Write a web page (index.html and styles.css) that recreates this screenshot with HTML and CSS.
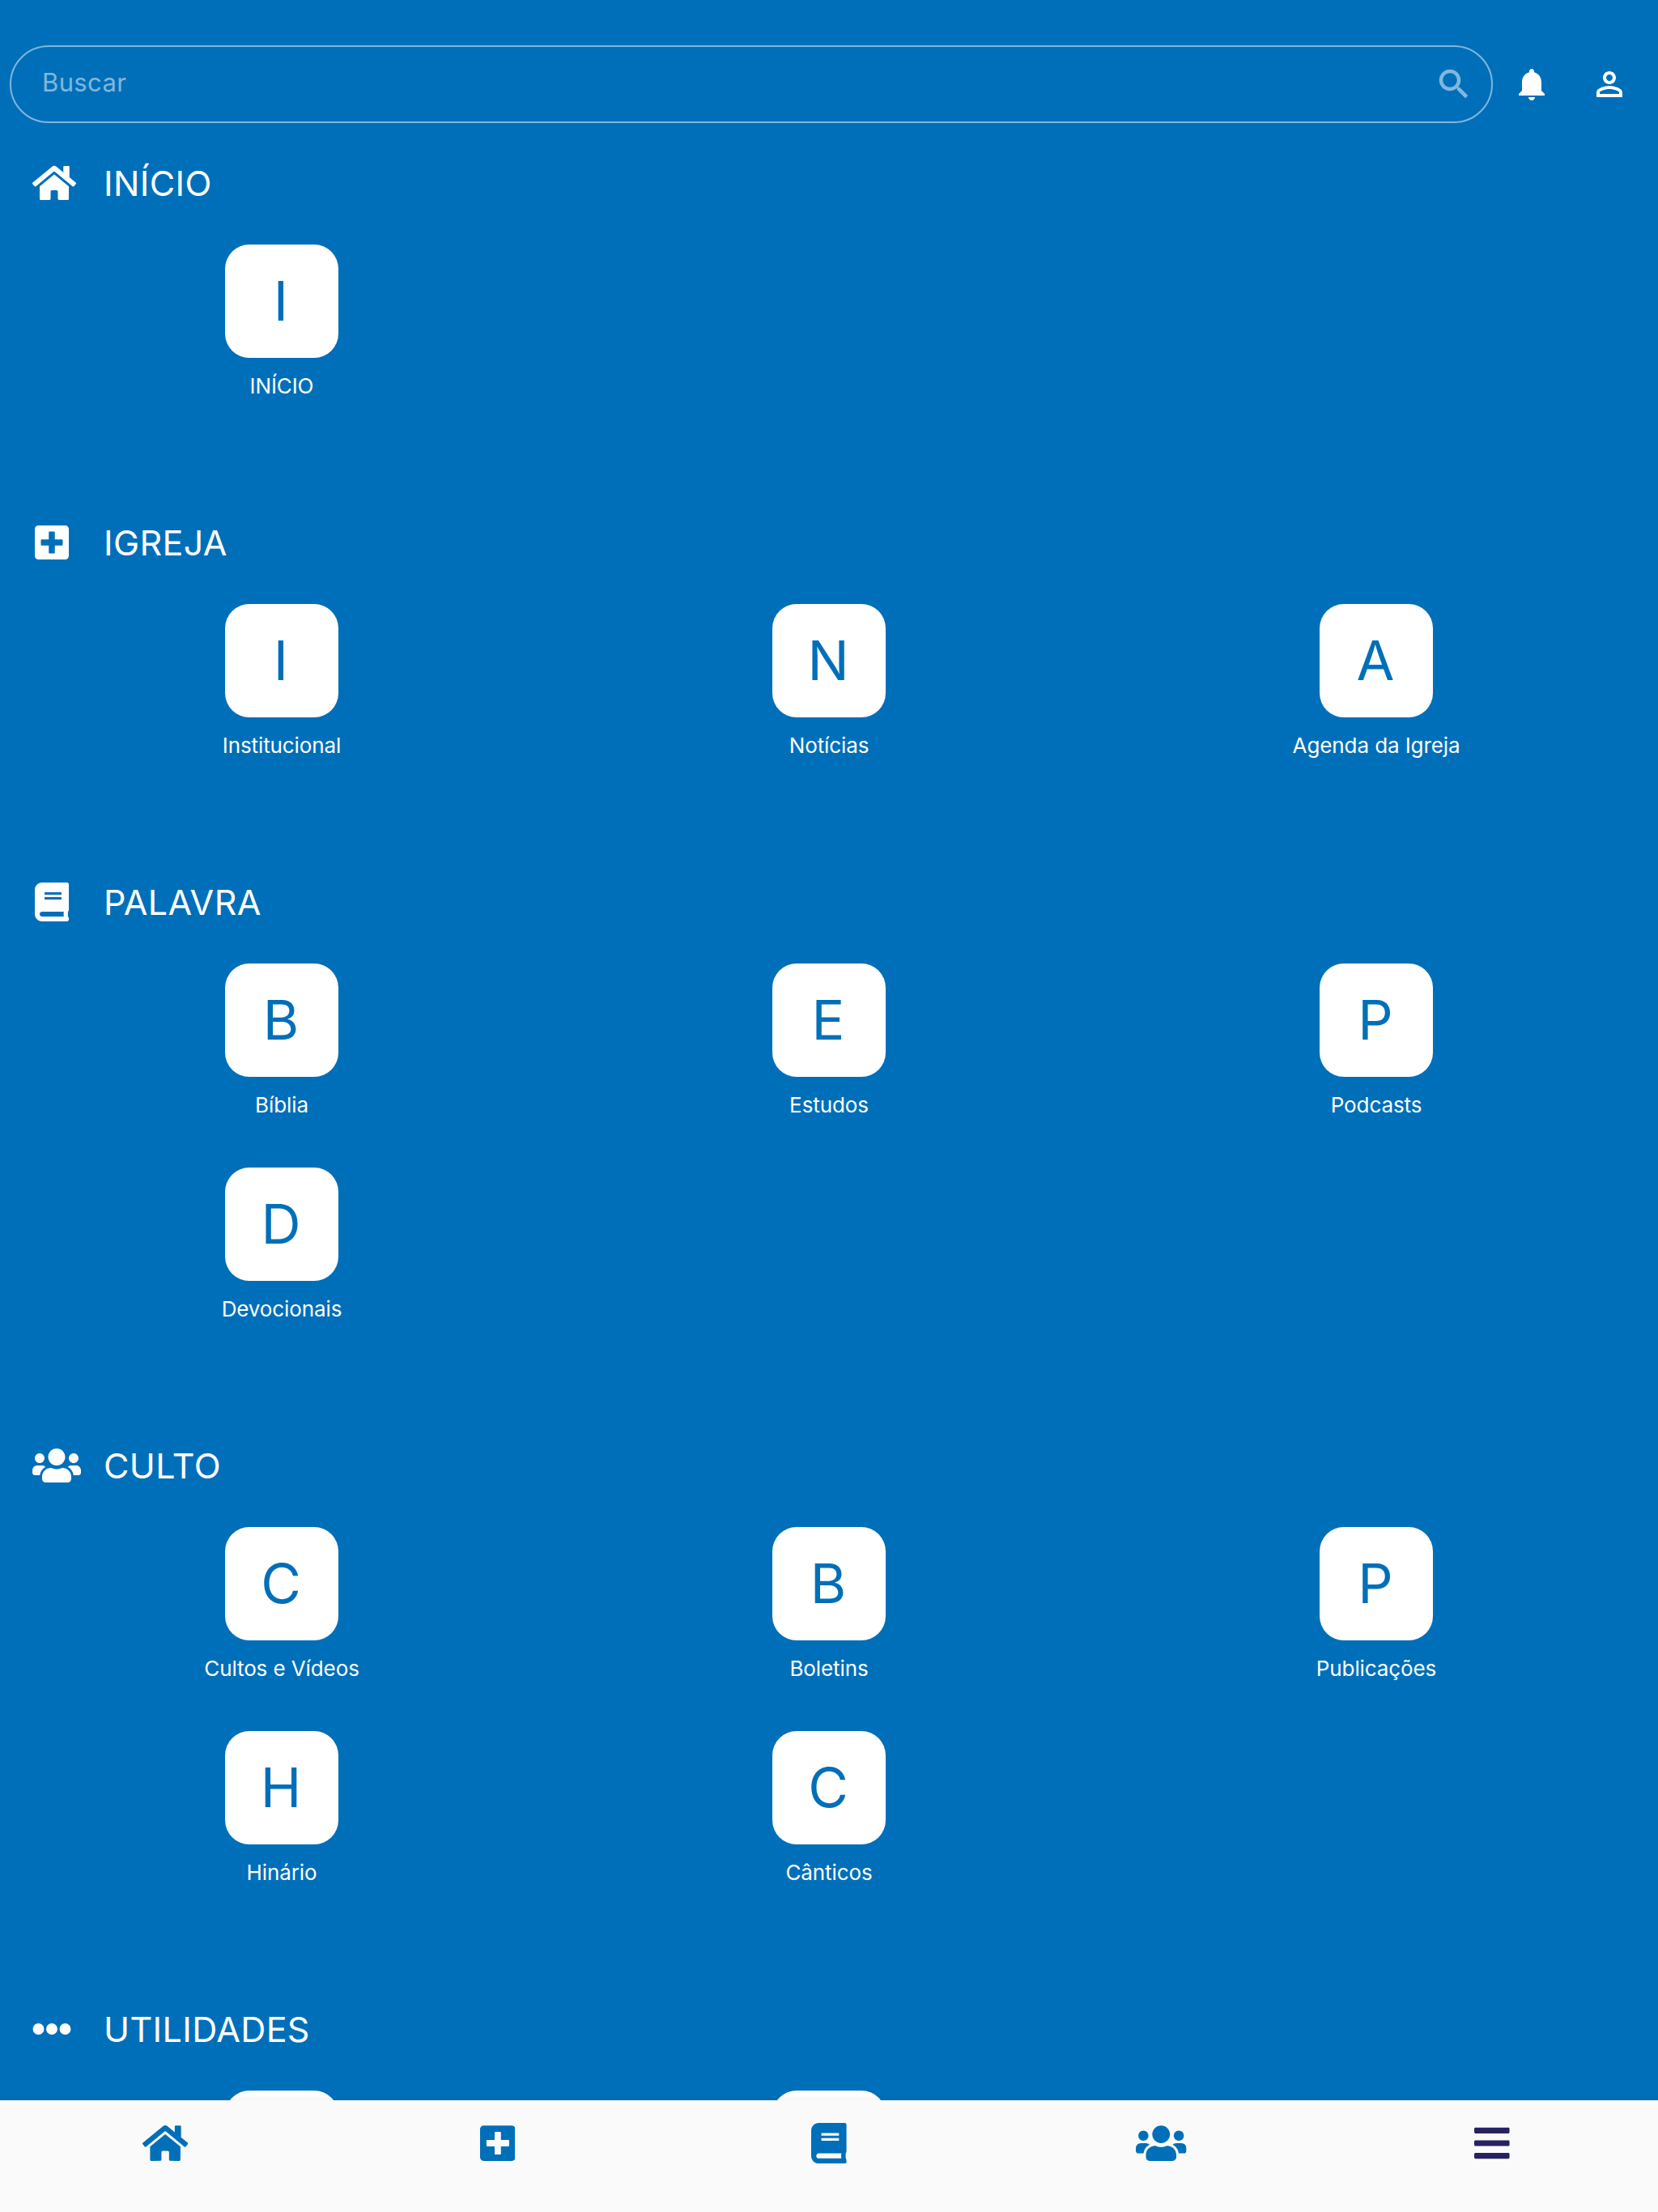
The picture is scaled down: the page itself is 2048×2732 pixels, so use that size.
FILE: index.html
```html
<!DOCTYPE html>
<html lang="pt-BR">
<head>
<meta charset="utf-8">
<title>Menu</title>
<link rel="stylesheet" href="styles.css">
</head>
<body>
<svg class="sprite" aria-hidden="true">
  <symbol id="home" viewBox="0 0 576 512"><path d="M280.37 148.26L96 300.11V464a16 16 0 0 0 16 16l112.06-.29a16 16 0 0 0 15.92-16V368a16 16 0 0 1 16-16h64a16 16 0 0 1 16 16v95.64a16 16 0 0 0 16 16.05L464 480a16 16 0 0 0 16-16V300L295.67 148.26a12.19 12.19 0 0 0-15.3 0zM571.6 251.47L488 182.56V44.05a12 12 0 0 0-12-12h-56a12 12 0 0 0-12 12v72.61L318.47 43a48 48 0 0 0-61 0L4.34 251.47a12 12 0 0 0-1.6 16.9l25.5 31A12 12 0 0 0 45.15 301l235.22-193.74a12.19 12.19 0 0 1 15.3 0L530.9 301a12 12 0 0 0 16.9-1.6l25.5-31a12 12 0 0 0-1.7-16.93z"/></symbol>
  <symbol id="plus" viewBox="0 0 448 512"><path fill-rule="evenodd" d="M400 32H48C21.500 32 0 53.500 0 80v352c0 26.500 21.500 48 48 48h352c26.500 0 48-21.500 48-48V80c0-26.500-21.500-48-48-48zm-32 252c0 6.600-5.400 12-12 12h-92v92c0 6.600-5.400 12-12 12h-56c-6.600 0-12-5.400-12-12v-92H92c-6.600 0-12-5.400-12-12v-56c0-6.600 5.400-12 12-12h92v-92c0-6.600 5.400-12 12-12h56c6.600 0 12 5.400 12 12v92h92c6.600 0 12 5.400 12 12v56z"/></symbol>
  <symbol id="book" viewBox="0 0 448 512"><path fill-rule="evenodd" d="M448 360V24c0-13.300-10.700-24-24-24H96C43 0 0 43 0 96v320c0 53 43 96 96 96h328c13.300 0 24-10.700 24-24v-16c0-7.500-3.500-14.300-8.900-18.700-4.200-15.400-4.200-59.300 0-74.700 5.400-4.300 8.900-11.100 8.900-18.600zM128 134c0-3.300 2.700-6 6-6h212c3.300 0 6 2.700 6 6v20c0 3.300-2.700 6-6 6H134c-3.300 0-6-2.700-6-6v-20zm0 64c0-3.300 2.700-6 6-6h212c3.300 0 6 2.700 6 6v20c0 3.300-2.700 6-6 6H134c-3.300 0-6-2.700-6-6v-20zm253.400 250H96c-17.700 0-32-14.300-32-32 0-17.600 14.400-32 32-32h285.400c-1.900 17.100-1.900 46.900 0 64z"/></symbol>
  <symbol id="users" viewBox="0 0 640 512"><path d="M96 224c35.300 0 64-28.700 64-64s-28.700-64-64-64-64 28.700-64 64 28.700 64 64 64zm448 0c35.300 0 64-28.700 64-64s-28.700-64-64-64-64 28.700-64 64 28.700 64 64 64zm32 32h-64c-17.600 0-33.500 7.100-45.100 18.600 40.300 22.100 68.900 62 75.100 109.400h66c17.700 0 32-14.300 32-32v-32c0-35.300-28.700-64-64-64zm-256 0c61.900 0 112-50.100 112-112S381.900 32 320 32 208 82.100 208 144s50.100 112 112 112zm76.800 32h-8.300c-20.800 10-43.900 16-68.500 16s-47.600-6-68.500-16h-8.300C179.600 288 128 339.600 128 403.200V432c0 26.500 21.500 48 48 48h288c26.500 0 48-21.500 48-48v-28.800c0-63.600-51.600-115.200-115.200-115.200zm-223.700-13.400C161.500 263.100 145.600 256 128 256H64c-35.300 0-64 28.700-64 64v32c0 17.700 14.300 32 32 32h65.900c6.300-47.400 34.900-87.300 75.200-109.400z"/></symbol>
  <symbol id="dots" viewBox="0 0 512 512"><circle cx="80" cy="256" r="74"/><circle cx="256" cy="256" r="74"/><circle cx="432" cy="256" r="74"/></symbol>
  <symbol id="bars" viewBox="0 0 448 512"><path d="M16 132h416c8.837 0 16-7.163 16-16V76c0-8.837-7.163-16-16-16H16C7.163 60 0 67.163 0 76v40c0 8.837 7.163 16 16 16zm0 160h416c8.837 0 16-7.163 16-16v-40c0-8.837-7.163-16-16-16H16c-8.837 0-16 7.163-16 16v40c0 8.837 7.163 16 16 16zm0 160h416c8.837 0 16-7.163 16-16v-40c0-8.837-7.163-16-16-16H16c-8.837 0-16 7.163-16 16v40c0 8.837 7.163 16 16 16z"/></symbol>
  <symbol id="search" viewBox="0 0 24 24"><path stroke="currentColor" stroke-width=".2" d="M15.500 14h-.79l-.28-.27C15.410 12.590 16 11.110 16 9.500 16 5.910 13.090 3 9.500 3S3 5.910 3 9.500 5.910 16 9.500 16c1.610 0 3.090-.59 4.230-1.570l.27.28v.79l5 4.990L20.490 19l-4.990-5zm-6 0C7.010 14 5 11.990 5 9.500S7.010 5 9.500 5 14 7.010 14 9.500 11.990 14 9.500 14z"/></symbol>
  <symbol id="bell" viewBox="0 0 24 24"><path d="M12 22c1.100 0 2-.9 2-2h-4c0 1.100.89 2 2 2zm6-6v-5c0-3.070-1.640-5.640-4.500-6.320V4c0-.83-.67-1.500-1.500-1.500s-1.500.67-1.500 1.500v.68C7.630 5.360 6 7.920 6 11v5l-2 2v1h16v-1l-2-2z"/></symbol>
  <symbol id="person" viewBox="0 0 24 24"><path d="M12 6c1.100 0 2 .9 2 2s-.9 2-2 2-2-.9-2-2 .9-2 2-2m0 9c2.970 0 6 1.360 6 2v1H6v-1c0-.64 3.030-2 6-2M12 4C9.790 4 8 5.790 8 8s1.790 4 4 4 4-1.790 4-4-1.790-4-4-4zm0 9c-2.670 0-8 1.340-8 4v3h16v-3c0-2.660-5.330-4-8-4z"/></symbol>
</svg>
<div class="app">
  <header class="header">
    <label class="search">
      <span class="search-text">Buscar</span>
      <svg class="icon-md"><use href="#search"/></svg>
    </label>
    <svg class="icon-md bell"><use href="#bell"/></svg>
    <svg class="icon-md person"><use href="#person"/></svg>
  </header>
  <main class="content">
    <section class="section">
      <h2 class="heading"><span class="slot"><svg class="fa home"><use href="#home"/></svg></span>INÍCIO</h2>
      <div class="grid">
        <a class="item"><span class="tile">I</span><span class="label">INÍCIO</span></a>
      </div>
    </section>
    <section class="section">
      <h2 class="heading"><span class="slot"><svg class="fa narrow"><use href="#plus"/></svg></span>IGREJA</h2>
      <div class="grid">
        <a class="item"><span class="tile">I</span><span class="label">Institucional</span></a>
        <a class="item"><span class="tile">N</span><span class="label">Notícias</span></a>
        <a class="item"><span class="tile">A</span><span class="label">Agenda da Igreja</span></a>
      </div>
    </section>
    <section class="section">
      <h2 class="heading"><span class="slot"><svg class="fa narrow"><use href="#book"/></svg></span>PALAVRA</h2>
      <div class="grid">
        <a class="item"><span class="tile">B</span><span class="label">Bíblia</span></a>
        <a class="item"><span class="tile">E</span><span class="label">Estudos</span></a>
        <a class="item"><span class="tile">P</span><span class="label">Podcasts</span></a>
        <a class="item"><span class="tile">D</span><span class="label">Devocionais</span></a>
      </div>
    </section>
    <section class="section">
      <h2 class="heading"><span class="slot"><svg class="fa users"><use href="#users"/></svg></span>CULTO</h2>
      <div class="grid">
        <a class="item"><span class="tile">C</span><span class="label">Cultos e Vídeos</span></a>
        <a class="item"><span class="tile">B</span><span class="label">Boletins</span></a>
        <a class="item"><span class="tile">P</span><span class="label">Publicações</span></a>
        <a class="item"><span class="tile">H</span><span class="label">Hinário</span></a>
        <a class="item"><span class="tile">C</span><span class="label">Cânticos</span></a>
      </div>
    </section>
    <section class="section">
      <h2 class="heading"><span class="slot"><svg class="fa"><use href="#dots"/></svg></span>UTILIDADES</h2>
      <div class="grid">
        <a class="item"><span class="tile"></span></a>
        <a class="item"><span class="tile"></span></a>
      </div>
    </section>
  </main>
  <nav class="tabs">
    <a class="tab"><svg class="tab-icon home"><use href="#home"/></svg></a>
    <a class="tab"><svg class="tab-icon"><use href="#plus"/></svg></a>
    <a class="tab"><svg class="tab-icon"><use href="#book"/></svg></a>
    <a class="tab"><svg class="tab-icon users"><use href="#users"/></svg></a>
    <a class="tab active"><svg class="tab-icon"><use href="#bars"/></svg></a>
  </nav>
</div>
</body>
</html>
```
FILE: styles.css
```css
* { box-sizing: border-box; }
body {
  margin: 0;
  background: #006fb9;
  color: #fff;
  font-family: Inter, "Liberation Sans", sans-serif;
}
svg { display: block; flex: none; fill: currentColor; }
.sprite { position: absolute; width: 0; height: 0; }
.app {
  display: flex;
  flex-direction: column;
  height: 2732px;
  overflow: hidden;
}
.header {
  display: flex;
  align-items: center;
  flex: none;
  height: 166px;
  padding: 42px 36px 0 12px;
}
.search {
  display: flex;
  align-items: center;
  justify-content: space-between;
  width: 1832px;
  height: 96px;
  padding: 0 22px 0 38px;
  border: 2px solid rgba(255, 255, 255, .5);
  border-radius: 48px;
  color: rgba(255, 255, 255, .5);
}
.search-text {
  padding-bottom: 4px;
  font-size: 31px;
  line-height: 40px;
  letter-spacing: .35px;
}
.icon-md { width: 48px; height: 48px; }
.bell { margin-left: 24px; }
.person { margin-left: 48px; }
.content {
  flex: 1;
  min-height: 0;
  overflow: hidden;
}
.section { padding-bottom: 56px; }
.heading {
  display: flex;
  align-items: center;
  height: 120px;
  margin: 0 0 16px;
  padding-left: 40px;
  font-size: 43px;
  font-weight: 400;
  letter-spacing: .4px;
}
.slot {
  display: flex;
  align-items: center;
  width: 88px;
}
.fa { width: 48px; height: 48px; }
.fa.home { width: 54px; }
.fa.narrow { width: 42px; margin-left: 3px; }
.fa.users { width: 60px; }
.grid {
  display: grid;
  grid-template-columns: repeat(3, 676px);
  grid-auto-rows: 252px;
  padding: 0 10px;
}
.item {
  display: flex;
  flex-direction: column;
  align-items: center;
}
.tile {
  width: 140px;
  height: 140px;
  padding-right: 2px;
  border-radius: 30px;
  background: #fff;
  color: #006fb9;
  font-size: 68px;
  line-height: 139px;
  text-align: center;
}
.label {
  margin-top: 18px;
  font-size: 26px;
  line-height: 34px;
  letter-spacing: -.1px;
}
.tabs {
  display: flex;
  flex: none;
  position: relative;
  height: 138px;
  padding-top: 28px;
  background: #fafafa;
  color: #006fb9;
  box-shadow: 0 0 10px rgba(0, 0, 0, .08);
}
.tab {
  display: flex;
  flex: 1;
  justify-content: center;
}
.tab-icon { width: 43.75px; height: 50px; }
.tab-icon.home { width: 56.25px; margin-right: 2px; }
.tab-icon.users { width: 62.5px; margin-left: 2px; }
.active { color: #262262; }
```
